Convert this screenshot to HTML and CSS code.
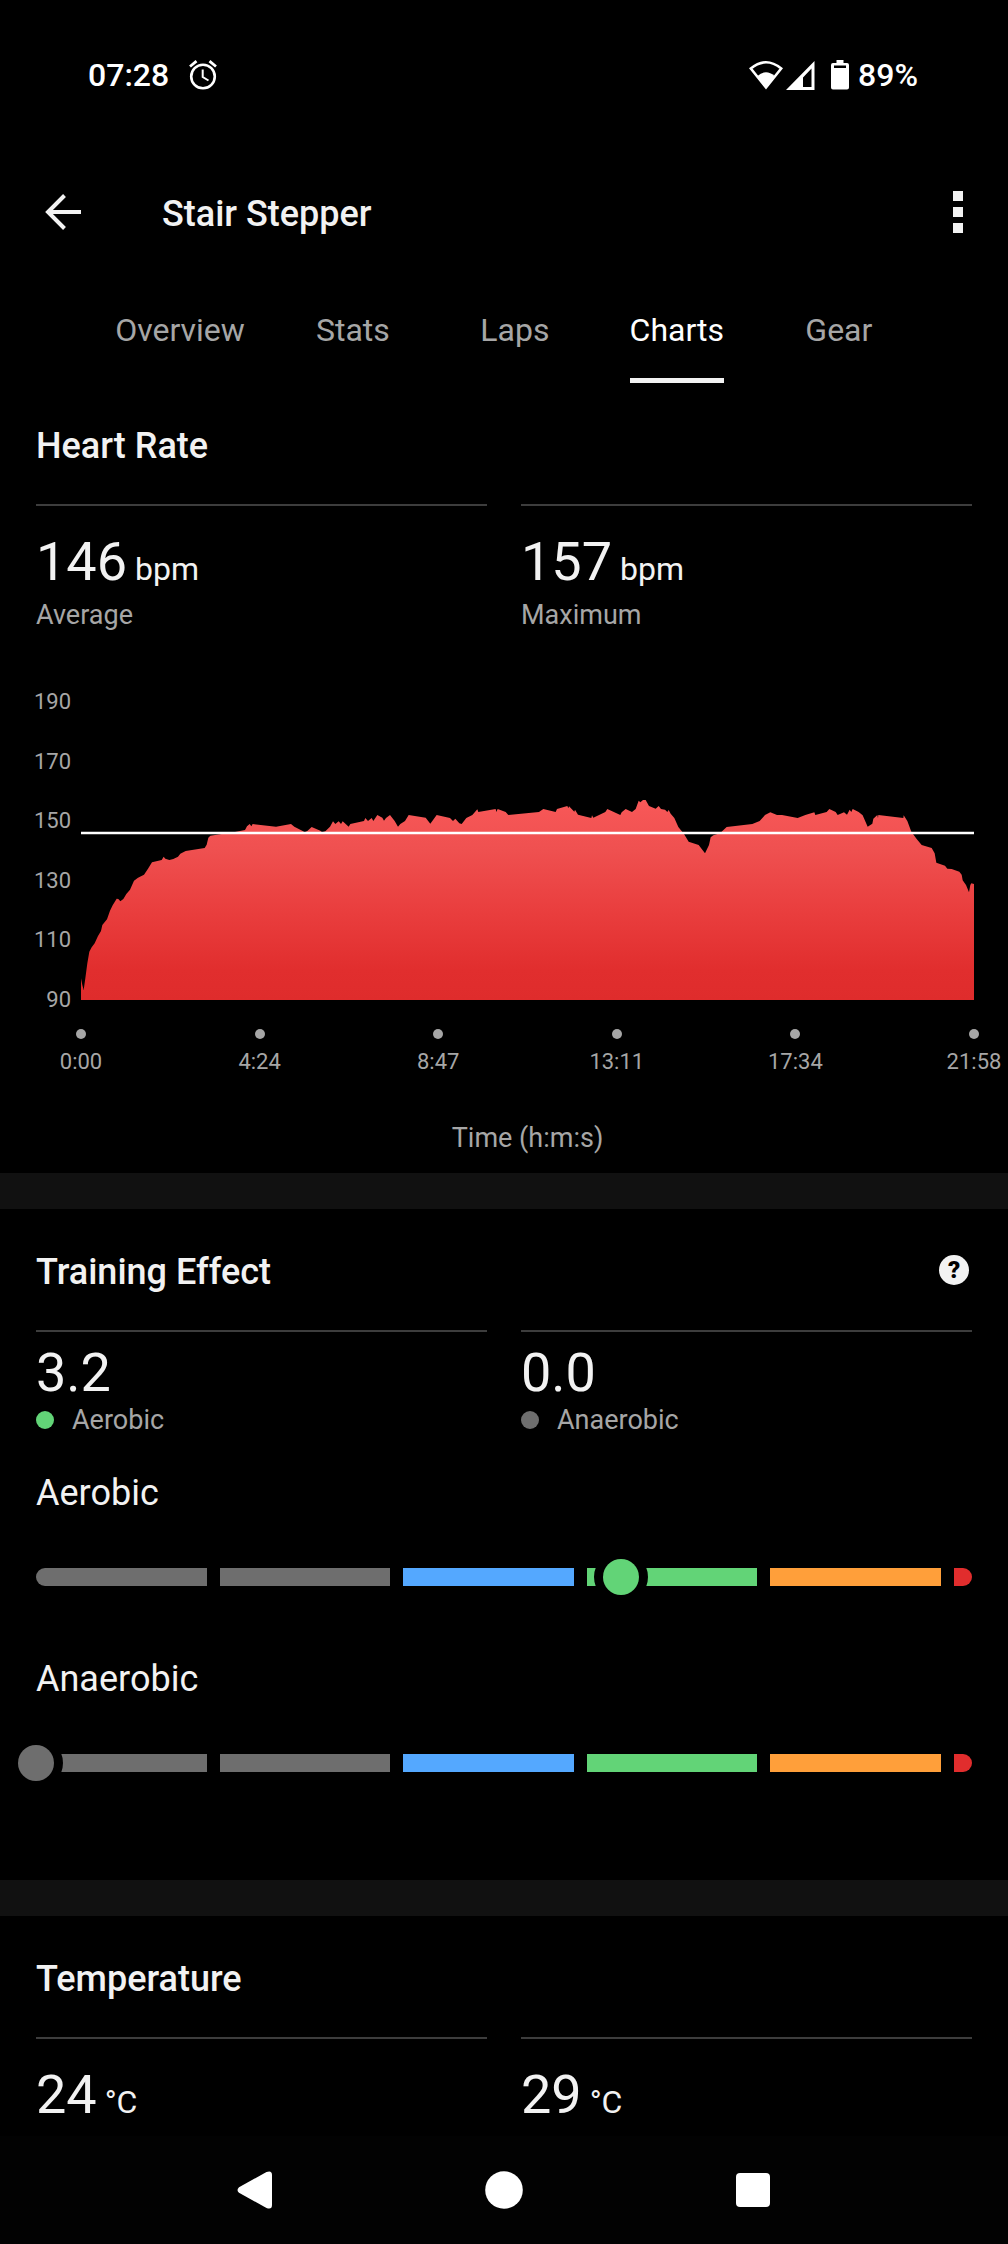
FILE: index.html
```html
<!DOCTYPE html>
<html lang="en">
<head>
    <meta charset="UTF-8">
    <meta name="viewport" content="width=device-width, initial-scale=1.0">
    <title>Stair Stepper - Charts</title>
    <link rel="stylesheet" href="styles.css">
</head>
<body>
    <div class="status-bar">
        <div class="status-group left">
            <span>07:28</span>
            <svg width="28" height="30" viewBox="0 0 28 30" fill="none" stroke="#fff">
                <circle cx="14" cy="16.500" r="11.800" stroke-width="2.600"/>
                <path d="M1 6.500 7.500 1.200M27 6.500 20.500 1.200" stroke-width="2.800"/>
                <path d="M13.700 9.500V17L19.500 20.500" stroke-width="2"/>
            </svg>
        </div>
        <div class="status-group right">
            <svg class="wifi" width="34" height="30" viewBox="0 0 34 30">
                <path d="M1.800 8.500Q17-4 32.200 8.500L17 27.500Z" fill="none" stroke="#fff" stroke-width="2.600"/>
                <path d="M8.500 16Q17 8.500 25.500 16L17 28Z" fill="#fff"/>
            </svg>
            <svg class="signal" width="29" height="29" viewBox="0 0 29 29">
                <path fill="#fff" fill-rule="evenodd" d="M28.500 0V29H0ZM25.500 7.500 17 16.500V26H25.500Z"/>
            </svg>
            <svg class="battery" width="18" height="30" viewBox="0 0 18 30">
                <path fill="#fff" fill-rule="evenodd" d="M5.500 0H12.500V3H16Q18 3 18 5V27.500Q18 29.500 16 29.500H2Q0 29.500 0 27.500V5Q0 3 2 3H5.500ZM3 5.500V8H15V5.500Z"/>
            </svg>
            <span>89%</span>
        </div>
    </div>

    <header class="app-bar">
        <button class="icon-btn back" aria-label="Back">
            <svg width="36" height="36" viewBox="0 0 36 36" fill="none" stroke="#f2f2f2" stroke-width="4">
                <path d="M36 18H3M19.500 1.500 3 18 19.500 34.500"/>
            </svg>
        </button>
        <h1>Stair Stepper</h1>
        <button class="icon-btn more" aria-label="More options">
            <svg width="10" height="42" viewBox="0 0 10 42" fill="#f2f2f2">
                <rect y="0" width="10" height="10"/>
                <rect y="16" width="10" height="10"/>
                <rect y="32" width="10" height="10"/>
            </svg>
        </button>
    </header>

    <nav class="tabs">
        <a href="#overview">Overview</a>
        <a href="#stats">Stats</a>
        <a href="#laps">Laps</a>
        <a href="#charts" class="active">Charts</a>
        <a href="#gear">Gear</a>
    </nav>

    <main>
        <section class="card heart-rate">
            <div class="card-head">
                <h2>Heart Rate</h2>
            </div>
            <div class="stats">
                <div class="stat">
                    <p class="value">146<span class="unit"> bpm</span></p>
                    <p class="label">Average</p>
                </div>
                <div class="stat">
                    <p class="value">157<span class="unit"> bpm</span></p>
                    <p class="label">Maximum</p>
                </div>
            </div>

            <div class="chart">
                <div class="y-axis">
                    <span>190</span>
                    <span>170</span>
                    <span>150</span>
                    <span>130</span>
                    <span>110</span>
                    <span>90</span>
                </div>
                <div class="plot">
                    <svg class="area" viewBox="243 96 2679 894" preserveAspectRatio="none">
                        <defs>
                            <linearGradient id="hrFill" gradientUnits="userSpaceOnUse" x1="0" y1="390" x2="0" y2="990">
                                <stop offset="0" stop-color="#f85858"/>
                                <stop offset="0.250" stop-color="#ef5050"/>
                                <stop offset="0.570" stop-color="#e93d3d"/>
                                <stop offset="0.850" stop-color="#e12e2e"/>
                                <stop offset="1" stop-color="#df2c2c"/>
                            </linearGradient>
                        </defs>
                        <path fill="url(#hrFill)" d="M243 990V925L247 945 251 960 256 925 262 880 268 845 275 832 284 820 294 798 303 783 307 765 321 748 330 722 338 706 350 686 355 687 361 694 370 687 379 672 390 659 402 632 414 623 432 614 444 596 456 577 485 570 491 560 496 566 508 570 520 567 534 560 541 551 557 543 614 534 620 524 625 503 631 497 665 492 705 486 735 480 741 469 749 462 754 469 758 462 828 470 873 462 883 470 908 483 914 487 922 483 935 471 961 482 966 487 976 484 990 470 999 454 1006 462 1016 454 1023 462 1028 454 1046 470 1051 462 1092 453 1096 444 1104 453 1115 444 1120 453 1132 435 1147 443 1152 452 1158 444 1170 435 1184 453 1194 470 1201 462 1215 453 1226 435 1277 443 1291 461 1310 435 1350 444 1359 453 1366 446 1378 460 1385 462 1399 444 1417 435 1432 418 1435 426 1487 417 1489 426 1493 417 1517 426 1525 435 1617 426 1630 417 1667 426 1671 417 1702 408 1705 415 1707 409 1723 425 1725 419 1734 434 1774 444 1776 436 1780 443 1816 426 1822 417 1861 435 1865 427 1877 417 1896 426 1907 417 1916 392 1921 397 1929 390 1937 390 1947 408 1967 416 1976 408 1983 417 1995 419 2002 426 2006 420 2012 431 2023 444 2035 471 2052 492 2066 515 2096 525 2115 550 2127 525 2132 502 2140 496 2160 490 2180 471 2257 462 2279 453 2295 435 2311 427 2331 435 2346 435 2393 444 2416 435 2443 427 2446 435 2480 426 2488 417 2507 426 2513 435 2532 427 2541 434 2549 419 2554 426 2558 417 2576 426 2588 436 2603 470 2617 461 2620 446 2632 435 2634 444 2635 435 2710 444 2711 436 2722 453 2734 485 2750 507 2765 525 2795 534 2804 550 2809 578 2835 587 2842 596 2855 597 2878 605 2885 614 2888 631 2898 645 2907 667 2911 645 2914 640 2922 642V990Z"/>
                        <line x1="243" y1="489" x2="2922" y2="489" stroke="#fff" stroke-width="8"/>
                    </svg>
                    <div class="x-axis">
                        <span class="tick">0:00</span>
                        <span class="tick">4:24</span>
                        <span class="tick">8:47</span>
                        <span class="tick">13:11</span>
                        <span class="tick">17:34</span>
                        <span class="tick">21:58</span>
                    </div>
                    <p class="axis-title">Time (h:m:s)</p>
                </div>
            </div>
        </section>

        <section class="card training-effect">
            <div class="card-head">
                <h2>Training Effect</h2>
                <button class="help" aria-label="About Training Effect">?</button>
            </div>
            <div class="stats compact">
                <div class="stat">
                    <p class="value">3.2</p>
                    <p class="label"><span class="dot green"></span>Aerobic</p>
                </div>
                <div class="stat">
                    <p class="value">0.0</p>
                    <p class="label"><span class="dot gray"></span>Anaerobic</p>
                </div>
            </div>

            <div class="gauges">
                <div class="gauge">
                    <h3 id="aerobic">Aerobic</h3>
                    <div class="track" role="meter" aria-labelledby="aerobic" aria-valuemin="0" aria-valuemax="5" aria-valuenow="3.2">
                        <span class="seg gray"></span>
                        <span class="seg gray"></span>
                        <span class="seg blue"></span>
                        <span class="seg green"></span>
                        <span class="seg orange"></span>
                        <span class="seg red"></span>
                        <span class="knob green" style="left: 62.5%"></span>
                    </div>
                </div>
                <div class="gauge">
                    <h3 id="anaerobic">Anaerobic</h3>
                    <div class="track" role="meter" aria-labelledby="anaerobic" aria-valuemin="0" aria-valuemax="5" aria-valuenow="0">
                        <span class="seg gray"></span>
                        <span class="seg gray"></span>
                        <span class="seg blue"></span>
                        <span class="seg green"></span>
                        <span class="seg orange"></span>
                        <span class="seg red"></span>
                        <span class="knob gray" style="left: 0%"></span>
                    </div>
                </div>
            </div>
        </section>

        <section class="card temperature">
            <div class="card-head">
                <h2>Temperature</h2>
            </div>
            <div class="stats">
                <div class="stat">
                    <p class="value">24<span class="unit"> °C</span></p>
                </div>
                <div class="stat">
                    <p class="value">29<span class="unit"> °C</span></p>
                </div>
            </div>
        </section>
    </main>

    <div class="nav-bar">
        <button aria-label="Back">
            <svg width="38" height="38" viewBox="0 0 38 38" fill="#fff">
                <path d="M3 16.200 30.500 1Q36 -1 36 4V34Q36 39 30.500 37L3 21.800Q0 19 3 16.200Z"/>
            </svg>
        </button>
        <button aria-label="Home">
            <svg width="38" height="38" viewBox="0 0 38 38" fill="#fff">
                <circle cx="19" cy="19" r="18.800"/>
            </svg>
        </button>
        <button aria-label="Recents">
            <svg width="38" height="38" viewBox="0 0 38 38" fill="#fff">
                <rect x="2" y="2" width="34" height="34" rx="4"/>
            </svg>
        </button>
    </div>
</body>
</html>
```
FILE: styles.css
```css
* {
    margin: 0;
    padding: 0;
    box-sizing: border-box;
}

body {
    font-family: Roboto, sans-serif;
    background: #000;
    color: #f2f2f2;
    min-height: 100vh;
    display: flex;
    flex-direction: column;
    overflow-x: hidden;
}

button {
    background: none;
    border: none;
    color: inherit;
    font-family: inherit;
    cursor: pointer;
    display: flex;
    align-items: center;
    justify-content: center;
}

svg {
    display: block;
}

/* Status bar */
.status-bar {
    display: flex;
    justify-content: space-between;
    padding: 50px 90px 49px 88px;
    color: #fff;
    font-size: 32px;
    font-weight: 500;
    line-height: 50px;
}

.status-group {
    display: flex;
    align-items: center;
}

.status-group.left {
    gap: 20px;
}

.signal {
    margin-left: 3px;
}

.battery {
    margin: 0 9px 0 16px;
}

/* App bar */
.app-bar {
    display: flex;
    align-items: center;
    height: 126px;
}

.app-bar h1 {
    flex: 1;
    margin-left: 36px;
    padding-top: 3px;
    font-size: 36px;
    font-weight: 500;
}

.icon-btn {
    height: 100%;
}

.icon-btn.back {
    width: 126px;
}

.icon-btn.more {
    width: 100px;
}

/* Tabs */
.tabs {
    display: flex;
    justify-content: center;
    height: 108px;
}

.tabs a {
    position: relative;
    min-width: 162px;
    padding: 0 27px;
    color: #a6a6a6;
    font-size: 32px;
    line-height: 110px;
    text-align: center;
    text-decoration: none;
}

.tabs a.active {
    color: #fff;
}

.tabs a.active::after {
    content: "";
    position: absolute;
    left: 34px;
    right: 34px;
    bottom: 0;
    height: 5px;
    background: #f2f2f2;
}

main {
    flex: 1;
}

/* Cards */
.card {
    padding: 42px 36px 20px;
}

.card + .card {
    border-top: 36px solid #111;
}

.card-head {
    display: flex;
    justify-content: space-between;
    align-items: flex-start;
    height: 42px;
    margin-bottom: 37px;
}

h2 {
    font-size: 36px;
    font-weight: 500;
    line-height: 42px;
}

.help {
    width: 30px;
    height: 30px;
    margin: 4px 3px 0 0;
    border-radius: 50%;
    background: #f2f2f2;
    color: #000;
    font-size: 24px;
    font-weight: 900;
    line-height: 30px;
}

.stats {
    display: grid;
    grid-template-columns: 1fr 1fr;
    gap: 34px;
}

.stat {
    border-top: 2px solid #3d3d3d;
    padding-top: 24px;
}

.value {
    font-size: 54px;
    line-height: 64px;
}

.unit {
    font-size: 32px;
    line-height: 1;
}

.label {
    display: flex;
    align-items: center;
    gap: 18px;
    margin-top: 6px;
    color: #a6a6a6;
    font-size: 27px;
    line-height: 30px;
}

.stats.compact .stat {
    padding-top: 9px;
}

.stats.compact .label {
    margin-top: 0;
}

.dot {
    width: 18px;
    height: 18px;
    border-radius: 50%;
}

.gray {
    background: #6e6e6e;
}

.blue {
    background: #54a8ff;
}

.green {
    background: #62d477;
}

.orange {
    background: #ff9f3a;
}

.red {
    background: #e12d2d;
}

/* Heart rate chart */
.chart {
    display: flex;
    align-items: flex-start;
    margin: 60px -2px 0 -36px;
}

.y-axis {
    display: flex;
    flex-direction: column;
    justify-content: space-between;
    width: 81px;
    height: 322px;
    padding-right: 10px;
    color: #a6a6a6;
    font-size: 22px;
    line-height: 24px;
    text-align: right;
}

.plot {
    flex: 1;
    padding-top: 12px;
}

.area {
    width: 100%;
    height: 298px;
}

.x-axis {
    display: flex;
    justify-content: space-between;
    margin-top: 29px;
    color: #a6a6a6;
    font-size: 22px;
    line-height: 28px;
}

/* zero width, so each label stays centered on its tick */
.tick {
    display: flex;
    flex-direction: column;
    align-items: center;
    gap: 9px;
    width: 0;
    white-space: nowrap;
}

.tick::before {
    content: "";
    width: 10px;
    height: 10px;
    border-radius: 50%;
    background: #a6a6a6;
}

.axis-title {
    margin-top: 47px;
    color: #a6a6a6;
    font-size: 27px;
    line-height: 30px;
    text-align: center;
}

/* Training effect gauges */
.training-effect {
    padding-bottom: 108px;
}

.gauges {
    display: flex;
    flex-direction: column;
    gap: 72px;
    margin-top: 37px;
}

h3 {
    font-size: 36px;
    font-weight: 400;
    line-height: 42px;
    margin-bottom: 54px;
}

.track {
    position: relative;
    display: flex;
    gap: 13px;
    height: 18px;
}

.seg {
    flex: 1;
}

.seg:first-child {
    border-radius: 9px 0 0 9px;
}

.seg.red {
    flex: none;
    width: 18px;
    border-radius: 0 9px 9px 0;
}

.knob {
    position: absolute;
    top: -9px;
    width: 36px;
    height: 36px;
    margin-left: -18px;
    border-radius: 50%;
    box-shadow: 0 0 0 9px #000;
}

.temperature {
    padding-bottom: 9px;
}

/* System navigation */
.nav-bar {
    display: flex;
    justify-content: center;
    height: 108px;
    background: #020202;
}

.nav-bar button {
    width: 249px;
}
```
